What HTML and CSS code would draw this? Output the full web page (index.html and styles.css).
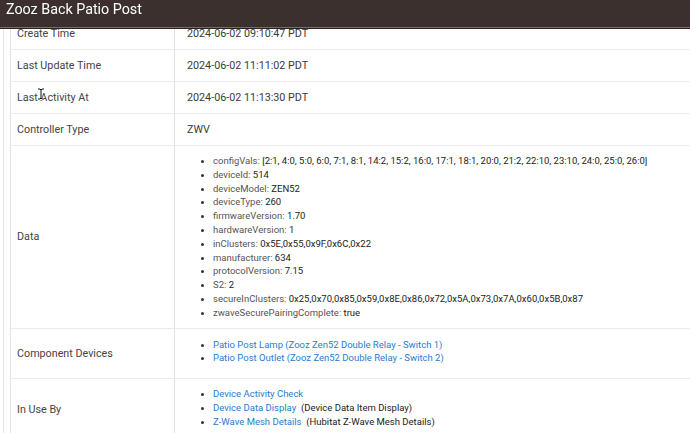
FILE: index.html
```html
<!DOCTYPE html>
<html>
<head>
<meta charset="utf-8">
<link rel="stylesheet" href="styles.css">
</head>
<body>
<header class="topbar"><h1 class="title">Zooz Back Patio Post</h1></header>
<div class="page">
  <div class="frame">
    <table class="info">
      <tr class="r-std"><td class="label">Create Time</td><td class="value">2024-06-02 09:10:47 PDT</td></tr>
      <tr class="r-std"><td class="label">Last Update Time</td><td class="value">2024-06-02 11:11:02 PDT</td></tr>
      <tr class="r-std"><td class="label">Last Activity At</td><td class="value">2024-06-02 11:13:30 PDT</td></tr>
      <tr class="r-std"><td class="label">Controller Type</td><td class="value">ZWV</td></tr>
      <tr class="r-data"><td class="label">Data</td><td class="value list-cell">
        <ul class="dlist">
          <li><span class="k">configVals:</span> <span class="v">[2:1, 4:0, 5:0, 6:0, 7:1, 8:1, 14:2, 15:2, 16:0, 17:1, 18:1, 20:0, 21:2, 22:10, 23:10, 24:0, 25:0, 26:0]</span></li>
          <li><span class="k">deviceId:</span> <span class="v">514</span></li>
          <li><span class="k">deviceModel:</span> <span class="v">ZEN52</span></li>
          <li><span class="k">deviceType:</span> <span class="v">260</span></li>
          <li><span class="k">firmwareVersion:</span> <span class="v">1.70</span></li>
          <li><span class="k">hardwareVersion:</span> <span class="v">1</span></li>
          <li><span class="k">inClusters:</span> <span class="v">0x5E,0x55,0x9F,0x6C,0x22</span></li>
          <li><span class="k">manufacturer:</span> <span class="v">634</span></li>
          <li><span class="k">protocolVersion:</span> <span class="v">7.15</span></li>
          <li><span class="k">S2:</span> <span class="v">2</span></li>
          <li><span class="k">secureInClusters:</span> <span class="v">0x25,0x70,0x85,0x59,0x8E,0x86,0x72,0x5A,0x73,0x7A,0x60,0x5B,0x87</span></li>
          <li><span class="k">zwaveSecurePairingComplete:</span> <span class="v">true</span></li>
        </ul>
      </td></tr>
      <tr class="r-comp"><td class="label">Component Devices</td><td class="value list-cell">
        <ul class="dlist">
          <li><a class="lnk" href="#">Patio Post Lamp (Zooz Zen52 Double Relay - Switch 1)</a></li>
          <li><a class="lnk" href="#">Patio Post Outlet (Zooz Zen52 Double Relay - Switch 2)</a></li>
        </ul>
      </td></tr>
      <tr class="r-use"><td class="label">In Use By</td><td class="value list-cell">
        <ul class="dlist">
          <li><a class="lnk" href="#">Device Activity Check</a></li>
          <li><a class="lnk" href="#">Device Data Display</a> <span class="v">&nbsp;(Device Data Item Display)</span></li>
          <li><a class="lnk" href="#">Z-Wave Mesh Details</a> <span class="v">&nbsp;(Hubitat Z-Wave Mesh Details)</span></li>
        </ul>
      </td></tr>
    </table>
  </div>
</div>
<svg class="cursor" width="8" height="12" viewBox="0 0 8 12" aria-hidden="true">
  <path d="M1 1h2l1 1 1-1h2M4 2v8M1 11h2l1-1 1 1h2" fill="none" stroke="#ffffff" stroke-width="2.2"/>
  <path d="M1 1h2l1 1 1-1h2M4 2v8M1 11h2l1-1 1 1h2" fill="none" stroke="#111111" stroke-width="1"/>
</svg>
</body>
</html>
```
FILE: styles.css
```css
html, body {
  margin: 0;
  padding: 0;
  background: #ffffff;
  overflow: hidden;
}
body {
  font-family: Roboto, "Liberation Sans", sans-serif;
  color: #333;
  width: 690px;
  height: 433px;
  position: relative;
}
.topbar {
  position: fixed;
  top: 0;
  left: 0;
  right: 0;
  height: 27px;
  background: #3b302d;
  border-bottom: 1px solid #7a6d66;
  box-shadow: 0 1px 0 #2a2220;
  z-index: 5;
}
.title {
  margin: 0;
  padding: 0 0 0 6px;
  font-family: Roboto, "Liberation Sans", sans-serif;
  font-weight: 400;
  font-size: 14.3px;
  line-height: 18px;
  color: #ffffff;
}
.page {
  padding-top: 18px;
  padding-left: 3px;
}
.frame {
  border-left: 1px solid #e6e6e6;
  padding-left: 6px;
}
.info {
  border-collapse: collapse;
  width: 680px;
  border-left: 1px solid #e3e3e3;
}
.info td {
  border-bottom: 1px solid #ebebeb;
  vertical-align: middle;
  padding: 0;
}
.label {
  width: 157px;
  padding-left: 6px !important;
  border-right: 1px solid #e3e3e3;
  font-size: 10.75px;
  color: #444;
}
.value {
  padding-left: 12px !important;
  font-size: 10.75px;
  color: #3a3a3a;
}
.r-std td { height: 31px; }
.r-data .list-cell { padding-top: 8px !important; padding-bottom: 8px !important; }
.r-comp .list-cell { padding-top: 9px !important; padding-bottom: 13px !important; }
.r-use .list-cell { padding-top: 8px !important; padding-bottom: 11px !important; }
.dlist {
  margin: 0;
  padding-left: 26px;
  font-size: 9.5px;
  line-height: 13.8px;
}
.dlist li::marker { color: #333; font-size: 9px; }
.k { color: #555; }
.v { color: #222; }
.lnk {
  color: #2a7bd0;
  text-decoration: none;
}
.cursor {
  position: absolute;
  left: 37px;
  top: 88px;
  z-index: 6;
}
```
